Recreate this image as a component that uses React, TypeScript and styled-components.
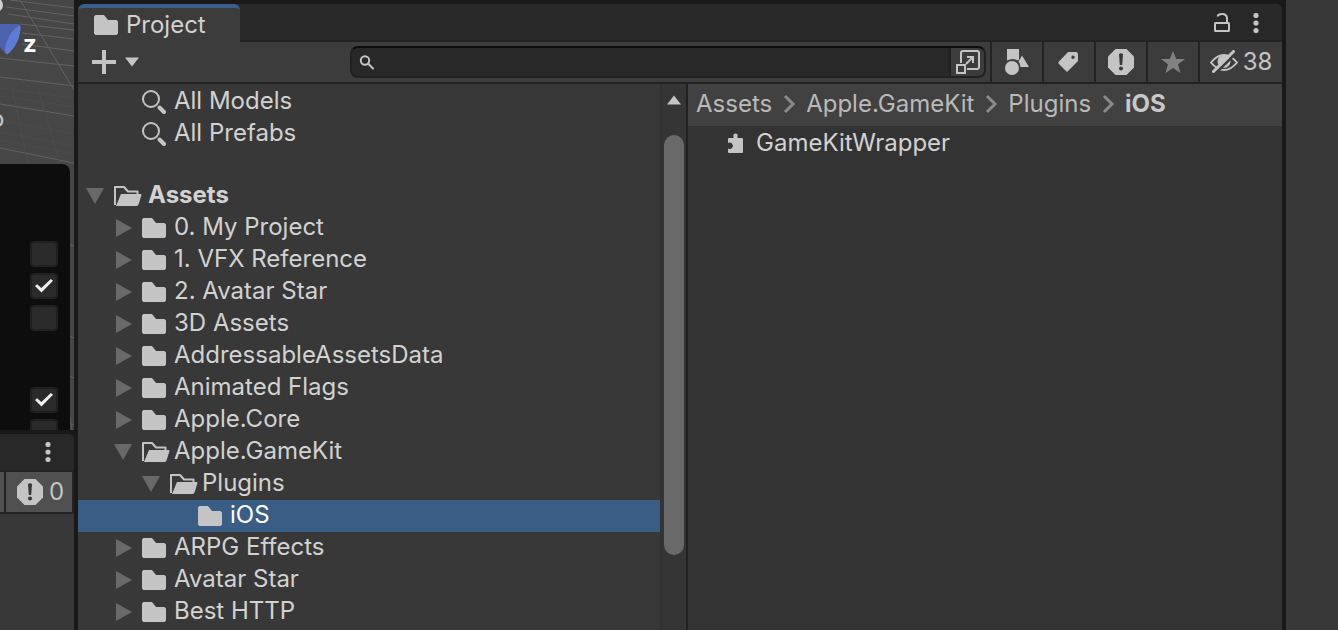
import React from "react";
import styled, { createGlobalStyle, css } from "styled-components";

const GlobalStyle = createGlobalStyle`
  *, *::before, *::after { box-sizing: border-box; }
  body {
    margin: 0;
    background: #191919;
    color: #d2d2d2;
    font-family: Inter, "Liberation Sans", sans-serif;
    font-size: 24px;
    line-height: 28px;
  }
  button {
    border: 0;
    padding: 0;
    background: none;
    color: inherit;
    font: inherit;
    cursor: pointer;
  }
  svg { display: block; flex: none; }
`;

const Editor = styled.div`
  display: grid;
  grid-template-columns: 74px minmax(0, 1fr) 52px;
  column-gap: 4px;
  min-height: 100vh;
  overflow: hidden;
`;

const Column = styled.div`
  display: flex;
  flex-direction: column;
  min-width: 0;
`;

/* ---------- Scene view ---------- */

const Scene = styled.section`
  position: relative;
  height: 430px;
  padding: 164px 4px 0 0;
  margin-bottom: 4px;
  background: #464646;
  overflow: hidden;
`;

const SceneDrawing = styled.svg`
  position: absolute;
  top: 0;
  left: 0;
`;

const AxisLabel = styled.span`
  position: absolute;
  top: 30px;
  left: 23px;
  color: #fff;
  font-size: 24px;
  font-weight: 700;
`;

const ProjectionLabel = styled.span`
  position: absolute;
  top: 105px;
  left: -10px;
  color: #c8c8c8;
`;

const Overlay = styled.div`
  position: relative;
  display: flex;
  flex-direction: column;
  align-items: flex-end;
  gap: 6px;
  height: 100%;
  padding: 77px 12px 0 0;
  border-top-right-radius: 8px;
  background: rgba(9, 9, 9, 0.93);
  overflow: hidden;
`;

const Toggle = styled.input<{ $group?: boolean }>`
  appearance: none;
  flex: none;
  display: grid;
  place-content: center;
  width: 28px;
  height: 26px;
  margin: ${(p) => (p.$group ? "50px 0 0" : "0")};
  border: 2px solid #202020;
  border-radius: 4px;
  background: #2a2a2a;

  &:checked::before {
    content: "";
    width: 18px;
    height: 14px;
    background: #eee;
    clip-path: polygon(0 50%, 12% 38%, 35% 64%, 88% 0, 100% 12%, 36% 96%);
  }
`;

/* ---------- Console ---------- */

const Console = styled.section`
  flex: 1;
  background: #383838;
  border-top-right-radius: 6px;
  overflow: hidden;
`;

const ConsoleHeader = styled.header`
  display: flex;
  justify-content: flex-end;
  height: 38px;
  padding-right: 20px;
  background: #282828;
  border-bottom: 2px solid #232323;
`;

const ConsoleBar = styled.div`
  display: flex;
  gap: 2px;
  height: 42px;
  padding-right: 2px;
  background: #232323;
  border-bottom: 2px solid #232323;
`;

const ConsoleFilter = styled.button<{ $stub?: boolean }>`
  display: flex;
  align-items: center;
  gap: 6px;
  width: ${(p) => (p.$stub ? "4px" : "66px")};
  padding-left: ${(p) => (p.$stub ? "0" : "11px")};
  background: #505050;
  color: #c4c4c4;
`;

/* ---------- Project window ---------- */

const Project = styled.main`
  display: flex;
  flex-direction: column;
  min-width: 0;
  margin-top: 4px;
  border-radius: 6px 6px 0 0;
  background: #383838;
  overflow: hidden;
`;

const TabStrip = styled.header`
  display: flex;
  align-items: stretch;
  justify-content: space-between;
  height: 38px;
  background: linear-gradient(#282828 36px, #232323 36px);
`;

const Tab = styled.button`
  display: flex;
  align-items: center;
  gap: 8px;
  width: 162px;
  padding-left: 16px;
  border-top: 4px solid #3a5f8a;
  border-radius: 6px 6px 0 0;
  background: #3c3c3c;
`;

const WindowActions = styled.div`
  display: flex;
  align-items: center;
  gap: 20px;
  padding-right: 20px;
`;

const IconButton = styled.button`
  display: flex;
  align-items: center;
  justify-content: center;
`;

const Toolbar = styled.div`
  display: flex;
  height: 42px;
  background: #3c3c3c;
  border-bottom: 2px solid #232323;
`;

const CreateArea = styled.div`
  display: flex;
  align-items: center;
  width: 272px;
  padding-left: 14px;
`;

const CreateButton = styled.button`
  display: flex;
  align-items: center;
  gap: 8px;
`;

const SearchField = styled.div`
  display: flex;
  flex: 1;
  align-items: center;
  min-width: 0;
  height: 32px;
  margin: 4px 4px 0 0;
  border: 2px solid #212121;
  border-top-color: #0d0d0d;
  border-radius: 8px;
  background: #282828;
  padding-left: 7px;
  overflow: hidden;
`;

const SearchInput = styled.input`
  flex: 1;
  min-width: 0;
  height: 28px;
  padding: 0 8px;
  border: 0;
  outline: 0;
  background: none;
  color: #d2d2d2;
  font: inherit;
`;

const PickerButton = styled(IconButton)`
  align-self: stretch;
  width: 35px;
  border-left: 2px solid #212121;
  background: #3c3c3c;
`;

const ToolButton = styled(IconButton)<{ $wide?: boolean }>`
  gap: 5px;
  width: ${(p) => (p.$wide ? "84px" : "52px")};
  border-left: 2px solid #232323;
  color: #c4c4c4;
`;

const Panes = styled.div`
  display: grid;
  flex: 1;
  grid-template-columns: 608fr 596fr;
`;

const TreePane = styled.div`
  display: flex;
  min-width: 0;
`;

const Tree = styled.div`
  flex: 1;
  min-width: 0;
  overflow: hidden;
`;

const SavedSearches = styled.div`
  padding: 2px 0 30px;
`;

const Row = styled.div<{ $depth: number; $selected?: boolean; $root?: boolean }>`
  display: flex;
  align-items: center;
  height: 32px;
  padding-left: ${(p) => 8 + p.$depth * 28}px;
  white-space: nowrap;
  ${(p) => p.$root && css`font-weight: 700;`}
  ${(p) => p.$selected && css`background: #3a5d86; color: #fff;`}
`;

const Arrow = styled.span`
  width: 28px;
`;

const RowIcon = styled.span`
  width: 32px;
  flex: none;
`;

const RowLabel = styled.span<{ $root?: boolean }>`
  padding-bottom: 2px;
  margin-left: ${(p) => (p.$root ? "2px" : "0")};
`;

const Scrollbar = styled.div`
  width: 26px;
  padding: 11px 2px 0;
  border-left: 2px solid #323232;
  background: #353535;
`;

const ScrollUp = styled(IconButton)`
  width: 100%;
  height: 10px;
  margin-bottom: 30px;
`;

const Thumb = styled.div`
  width: 20px;
  height: 420px;
  border-radius: 10px;
  background: #696969;
`;

const ContentPane = styled.div`
  min-width: 0;
  border-left: 2px solid #212121;
  background: #333;
`;

const Breadcrumbs = styled.nav`
  display: flex;
  align-items: center;
  gap: 10px;
  height: 42px;
  padding: 0 0 2px 8px;
  background: #414141;
  white-space: nowrap;
`;

const Crumb = styled.a<{ $current?: boolean }>`
  color: ${(p) => (p.$current ? "#c8c8c8" : "#bababa")};
  font-weight: ${(p) => (p.$current ? 700 : 400)};
  text-decoration: none;
`;

const AssetRow = styled.div`
  display: flex;
  align-items: center;
  gap: 12px;
  height: 34px;
  padding-left: 38px;
`;

const Inspector = styled.aside`
  background: #383838;
`;

/* ---------- Icons ---------- */

const FolderIcon = () => (
  <svg width="24" height="20" viewBox="0 0 24 20" fill="#c4c4c4">
    <path d="M1.5 0H10l4 5h8.5L24 6.5v12L22.5 20h-21L0 18.5v-17z" />
  </svg>
);

const OpenFolderIcon = () => (
  <svg width="28" height="20" viewBox="0 0 28 20">
    <path d="M1 19V1h9l4 4.5h9.500V9" fill="none" stroke="#c4c4c4" strokeWidth="2" strokeLinejoin="round" />
    <path d="M7 8h20l.5 1-3 9.500-1.500 1.500H2z" fill="#c4c4c4" />
  </svg>
);

const LensIcon = () => (
  <svg width="24" height="24" viewBox="0 0 24 24" fill="none" stroke="#c4c4c4">
    <circle cx="9" cy="9" r="8" strokeWidth="2" />
    <path d="M17.5 17.5l4.500 4.500" strokeWidth="4" strokeLinecap="round" />
  </svg>
);

const FieldLensIcon = () => (
  <svg width="16" height="16" viewBox="0 0 16 16" fill="none" stroke="#c4c4c4" strokeWidth="2">
    <circle cx="6" cy="6.5" r="4.2" />
    <path d="M9 9.5l5 5" strokeLinecap="round" />
  </svg>
);

const CollapsedIcon = () => (
  <svg width="20" height="18" viewBox="0 0 20 18">
    <path d="M2 0l16 9L2 18z" fill="#696969" />
  </svg>
);

const ExpandedIcon = () => (
  <svg width="18" height="16" viewBox="0 0 18 16">
    <path d="M0 0h18L9 16z" fill="#696969" />
  </svg>
);

const KebabIcon = () => (
  <svg width="12" height="20" viewBox="0 0 12 20" fill="#c4c4c4">
    <circle cx="6" cy="2.5" r="2.6" />
    <circle cx="6" cy="10" r="2.6" />
    <circle cx="6" cy="17.5" r="2.6" />
  </svg>
);

const LockIcon = () => (
  <svg width="16" height="20" viewBox="0 0 16 20" fill="none" stroke="#c4c4c4" strokeWidth="2">
    <rect x="1" y="10" width="14" height="8" rx="0.5" />
    <path d="M3.5 3.5C4 1.5 6 1 8 1c3 0 5 1.500 5 4.500V10" />
  </svg>
);

const PlusIcon = () => (
  <svg width="24" height="24" viewBox="0 0 24 24">
    <path d="M12 0v24M0 12h24" stroke="#c4c4c4" strokeWidth="4" />
  </svg>
);

const CaretIcon = ({ up }: { up?: boolean }) => (
  <svg width="16" height="10" viewBox="0 0 16 10">
    <path d={up ? "M1 9.5h14L8 0.5z" : "M1 0.5h14L8 9.5z"} fill="#c4c4c4" />
  </svg>
);

const PickerIcon = () => (
  <svg width="24" height="24" viewBox="0 0 24 24" fill="none" stroke="#c4c4c4" strokeWidth="2">
    <path d="M5 13V3q0-2 2-2h14q2 0 2 2v14q0 2-2 2H11" />
    <rect x="1" y="15" width="8" height="8" />
    <path d="M10 14l7-7M11 7h6v6" />
  </svg>
);

const ShapesIcon = () => (
  <svg width="24" height="26" viewBox="0 0 24 26" fill="#c4c4c4">
    <path d="M2 0h12v10.5l-1 1Q8 8.500 2 11.500z" />
    <path d="M17 6.5L24 18h-8.500q0-3-2-5.500z" />
    <circle cx="7" cy="19" r="7" />
  </svg>
);

const TagIcon = () => (
  <svg width="22" height="20" viewBox="0 0 22 20">
    <path
      fillRule="evenodd"
      fill="#c4c4c4"
      d="M10 0h8.500L20 1.500V9L9 20 .5 11.500v-1.500zM15 3.500a1.700 1.700 0 100 3.400 1.700 1.700 0 000-3.400z"
    />
  </svg>
);

const AlertIcon = () => (
  <svg width="26" height="26" viewBox="0 0 26 26">
    <path d="M7.500 0h11L26 7.500v11L18.500 26h-11L0 18.500v-11z" fill="#c4c4c4" />
    <path d="M11 5q2-1.500 4 0l-.8 11h-2.400z" fill="#383838" />
    <circle cx="13" cy="19.500" r="2" fill="#383838" />
  </svg>
);

const StarIcon = () => (
  <svg width="24" height="22" viewBox="0 0 24 22">
    <path d="M12 0l3.300 8H24l-7 5.300L19.500 22 12 17l-7.500 5L7 13.300 0 8h8.700z" fill="#828282" />
  </svg>
);

const HiddenIcon = () => (
  <svg width="28" height="24" viewBox="0 0 28 24">
    <path d="M1 12.500Q7 5 14 5t13 7.500Q21 20 14 20T1 12.500z" fill="none" stroke="#c4c4c4" strokeWidth="2" />
    <circle cx="14" cy="11.500" r="6.500" fill="#c4c4c4" />
    <path d="M5.500 23.500L26.500 2.500" stroke="#3c3c3c" strokeWidth="2.500" />
    <path d="M3.500 21.500L23.500 1.500" stroke="#c4c4c4" strokeWidth="3" strokeLinecap="round" />
  </svg>
);

const ChevronIcon = () => (
  <svg width="14" height="20" viewBox="0 0 14 20">
    <path d="M3 2l8 8-8 8" fill="none" stroke="#8a8a8a" strokeWidth="3" />
  </svg>
);

const PluginIcon = () => (
  <svg width="18" height="20" viewBox="0 0 18 20">
    <path
      d="M2 6q0-1 1-1h4.500V3.500a2.200 2.200 0 1 1 4 0V5H16q1 0 1 1v13q0 1-1 1H3q-1 0-1-1v-3.500a3.200 3.200 0 1 0 0-5.500z"
      fill="#c4c4c4"
    />
  </svg>
);

const SceneLines = () => (
  <SceneDrawing width="74" height="430" viewBox="0 0 74 430" fill="none" aria-hidden="true">
    <path
      d="M10 0l64 8M6 7l68 9M8 14l66 10M20 24l54 6M22 33l52 6M22 44l52 7M0 58l74 8M0 77l74 9M0 104l74 12M0 148l74 15M0 224l74 22"
      stroke="#636363"
    />
    <path d="M0 88l74 10M0 96l74 11M0 120l74 14M0 132l74 14M0 140l74 14" stroke="#4b4b4b" />
    <path d="M12 88l16 76M38 88l22 76" stroke="#4d4d4d" />
    <path d="M20 0l54 90" stroke="#626262" />
    <path d="M0 310l74 28M0 350l74 28M0 395l74 30M50 300l22 130" stroke="#5c5c5c" />
    <path d="M0 24h17q4 0 3.500 5L8 54H6L0 47z" fill="#4d62ae" />
    <path d="M20 25q1.500 3-1.500 14Q14 50 7 54.500 3 52 7 41T20 25z" fill="#5e7bd6" />
    <circle cx="-4" cy="5" r="7" fill="#d0d0d0" />
  </SceneDrawing>
);

/* ---------- Data ---------- */

type Folder = { name: string; depth: number; state?: "open" | "closed"; selected?: boolean };

const folders: Folder[] = [
  { name: "Assets", depth: 0, state: "open" },
  { name: "0. My Project", depth: 1, state: "closed" },
  { name: "1. VFX Reference", depth: 1, state: "closed" },
  { name: "2. Avatar Star", depth: 1, state: "closed" },
  { name: "3D Assets", depth: 1, state: "closed" },
  { name: "AddressableAssetsData", depth: 1, state: "closed" },
  { name: "Animated Flags", depth: 1, state: "closed" },
  { name: "Apple.Core", depth: 1, state: "closed" },
  { name: "Apple.GameKit", depth: 1, state: "open" },
  { name: "Plugins", depth: 2, state: "open" },
  { name: "iOS", depth: 3, selected: true },
  { name: "ARPG Effects", depth: 1, state: "closed" },
  { name: "Avatar Star", depth: 1, state: "closed" },
  { name: "Best HTTP", depth: 1, state: "closed" },
];

const crumbs = ["Assets", "Apple.GameKit", "Plugins", "iOS"];

export default function App() {
  return (
    <>
      <GlobalStyle />
      <Editor>
        <Column>
          <Scene aria-label="Scene">
            <SceneLines />
            <AxisLabel>z</AxisLabel>
            <ProjectionLabel>o</ProjectionLabel>
            <Overlay>
              <Toggle type="checkbox" aria-label="Option 1" />
              <Toggle type="checkbox" aria-label="Option 2" defaultChecked />
              <Toggle type="checkbox" aria-label="Option 3" />
              <Toggle type="checkbox" aria-label="Option 4" defaultChecked $group />
              <Toggle type="checkbox" aria-label="Option 5" />
            </Overlay>
          </Scene>
          <Console aria-label="Console">
            <ConsoleHeader>
              <IconButton aria-label="Console menu"><KebabIcon /></IconButton>
            </ConsoleHeader>
            <ConsoleBar>
              <ConsoleFilter $stub aria-label="Warnings" />
              <ConsoleFilter aria-label="Errors"><AlertIcon />0</ConsoleFilter>
            </ConsoleBar>
          </Console>
        </Column>

        <Project>
          <TabStrip>
            <Tab><FolderIcon />Project</Tab>
            <WindowActions>
              <IconButton aria-label="Lock"><LockIcon /></IconButton>
              <IconButton aria-label="Project menu"><KebabIcon /></IconButton>
            </WindowActions>
          </TabStrip>
          <Toolbar>
            <CreateArea>
              <CreateButton aria-label="Create"><PlusIcon /><CaretIcon /></CreateButton>
            </CreateArea>
            <SearchField>
              <FieldLensIcon />
              <SearchInput type="text" aria-label="Search assets" />
              <PickerButton aria-label="Open in search"><PickerIcon /></PickerButton>
            </SearchField>
            <ToolButton aria-label="Search by type"><ShapesIcon /></ToolButton>
            <ToolButton aria-label="Search by label"><TagIcon /></ToolButton>
            <ToolButton aria-label="Search by import log"><AlertIcon /></ToolButton>
            <ToolButton aria-label="Save search"><StarIcon /></ToolButton>
            <ToolButton aria-label="Hidden packages" $wide><HiddenIcon />38</ToolButton>
          </Toolbar>
          <Panes>
            <TreePane>
              <Tree>
                <SavedSearches>
                  {["All Models", "All Prefabs"].map((name) => (
                    <Row key={name} $depth={1}>
                      <Arrow />
                      <RowIcon><LensIcon /></RowIcon>
                      <RowLabel>{name}</RowLabel>
                    </Row>
                  ))}
                </SavedSearches>
                {folders.map((f) => (
                  <Row key={f.name} $depth={f.depth} $selected={f.selected} $root={f.depth === 0}>
                    <Arrow>
                      {f.state === "open" && <ExpandedIcon />}
                      {f.state === "closed" && <CollapsedIcon />}
                    </Arrow>
                    <RowIcon>{f.state === "open" ? <OpenFolderIcon /> : <FolderIcon />}</RowIcon>
                    <RowLabel $root={f.depth === 0}>{f.name}</RowLabel>
                  </Row>
                ))}
              </Tree>
              <Scrollbar>
                <ScrollUp aria-label="Scroll up"><CaretIcon up /></ScrollUp>
                <Thumb />
              </Scrollbar>
            </TreePane>
            <ContentPane>
              <Breadcrumbs aria-label="Path">
                {crumbs.map((name, i) => (
                  <React.Fragment key={name}>
                    {i > 0 && <ChevronIcon />}
                    <Crumb href="#" $current={i === crumbs.length - 1}>{name}</Crumb>
                  </React.Fragment>
                ))}
              </Breadcrumbs>
              <AssetRow><PluginIcon />GameKitWrapper</AssetRow>
            </ContentPane>
          </Panes>
        </Project>
        <Inspector />
      </Editor>
    </>
  );
}
